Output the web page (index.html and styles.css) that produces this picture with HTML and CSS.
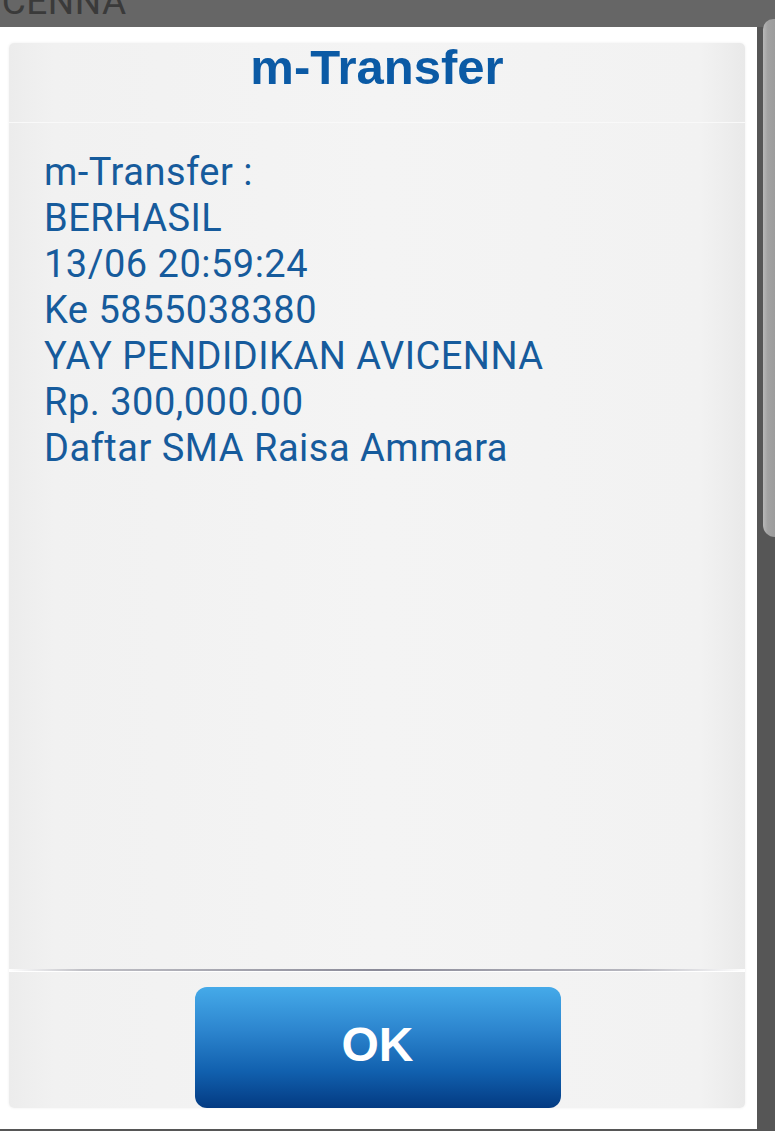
FILE: index.html
```html
<!DOCTYPE html>
<html>
<head>
<meta charset="utf-8">
<link rel="stylesheet" href="styles.css">
</head>
<body>
<div class="screen">
  <div class="topbar"><span class="behind">AVICENNA</span></div>
  <div class="main">
    <div class="dialog">
      <div class="panel">
        <div class="head">m-Transfer</div>
        <div class="content">
          <div class="line">m-Transfer :</div>
          <div class="line">BERHASIL</div>
          <div class="line">13/06 20:59:24</div>
          <div class="line">Ke 5855038380</div>
          <div class="line">YAY PENDIDIKAN AVICENNA</div>
          <div class="line">Rp. 300,000.00</div>
          <div class="line">Daftar SMA Raisa Ammara</div>
        </div>
        <div class="divider"></div>
        <div class="foot">
          <button class="ok">OK</button>
        </div>
      </div>
    </div>
    <div class="side"><div class="thumb"></div></div>
  </div>
</div>
</body>
</html>
```

FILE: styles.css
```css
* { box-sizing: border-box; }
html, body { margin: 0; padding: 0; }
body {
  width: 775px;
  height: 1131px;
  background: #565656;
  overflow: hidden;
  font-family: Roboto, "Liberation Sans", sans-serif;
}
.screen {
  display: flex;
  flex-direction: column;
  height: 1131px;
}
.topbar {
  height: 27px;
  background: #666666;
  overflow: hidden;
  position: relative;
  z-index: 1;
}
.behind {
  display: block;
  white-space: nowrap;
  font-family: Roboto, sans-serif;
  font-size: 37px;
  line-height: 37px;
  color: #3a3a3a;
  margin-top: -17px;
  margin-left: -56px;
  letter-spacing: 0.5px;
}
.main {
  display: flex;
  height: 1102px;
}
.dialog {
  width: 757px;
  background: #ffffff;
  padding: 16px 12px 21px 9px;
}
.panel {
  height: 100%;
  border-radius: 5px;
  background: linear-gradient(90deg, #ececec 0%, #f1f1f1 6%, #f4f4f4 50%, #f2f2f2 94%, #e9e9e9 100%);
  box-shadow: 0 0 3px rgba(0,0,0,0.07);
  display: flex;
  flex-direction: column;
}
.head {
  height: 80px;
  text-align: center;
  font-family: "Liberation Sans", Arial, sans-serif;
  font-weight: bold;
  font-size: 49px;
  line-height: 48px;
  color: #0b5aa5;
  border-bottom: 1px solid #f9f9f9;
  border-radius: 5px 5px 0 0;
}
.content {
  flex: 1;
  padding: 26px 0 0 35px;
}
.line {
  font-size: 38px;
  line-height: 46px;
  letter-spacing: 0.5px;
  color: #165b9c;
}
.divider {
  height: 3px;
  border-bottom: 1px solid #ffffff;
  background: linear-gradient(90deg, #ffffff 0%, #c0c0c6 10%, #8a8a98 50%, #b8b8c0 85%, #ffffff 100%);
}
.foot {
  height: 136px;
  display: flex;
  justify-content: center;
  align-items: flex-end;
}
.ok {
  width: 366px;
  height: 121px;
  border: none;
  border-radius: 12px;
  background: linear-gradient(180deg, #45aae9 0%, #2d86cf 35%, #1160ae 70%, #033a82 100%);
  color: #ffffff;
  font-family: "Liberation Sans", Arial, sans-serif;
  font-weight: bold;
  font-size: 48px;
  line-height: 1;
  padding: 0 0 6px 0;
  margin-left: 1px;
}
.side {
  flex: 1;
  background: #565656;
  padding-left: 6px;
}
.thumb {
  margin-top: -8px;
  height: 518px;
  background: linear-gradient(90deg, #b8b8b8, #a2a2a2 40%, #9c9c9c);
  border-radius: 12px 0 0 14px;
  position: relative;
  z-index: 2;
}
```
